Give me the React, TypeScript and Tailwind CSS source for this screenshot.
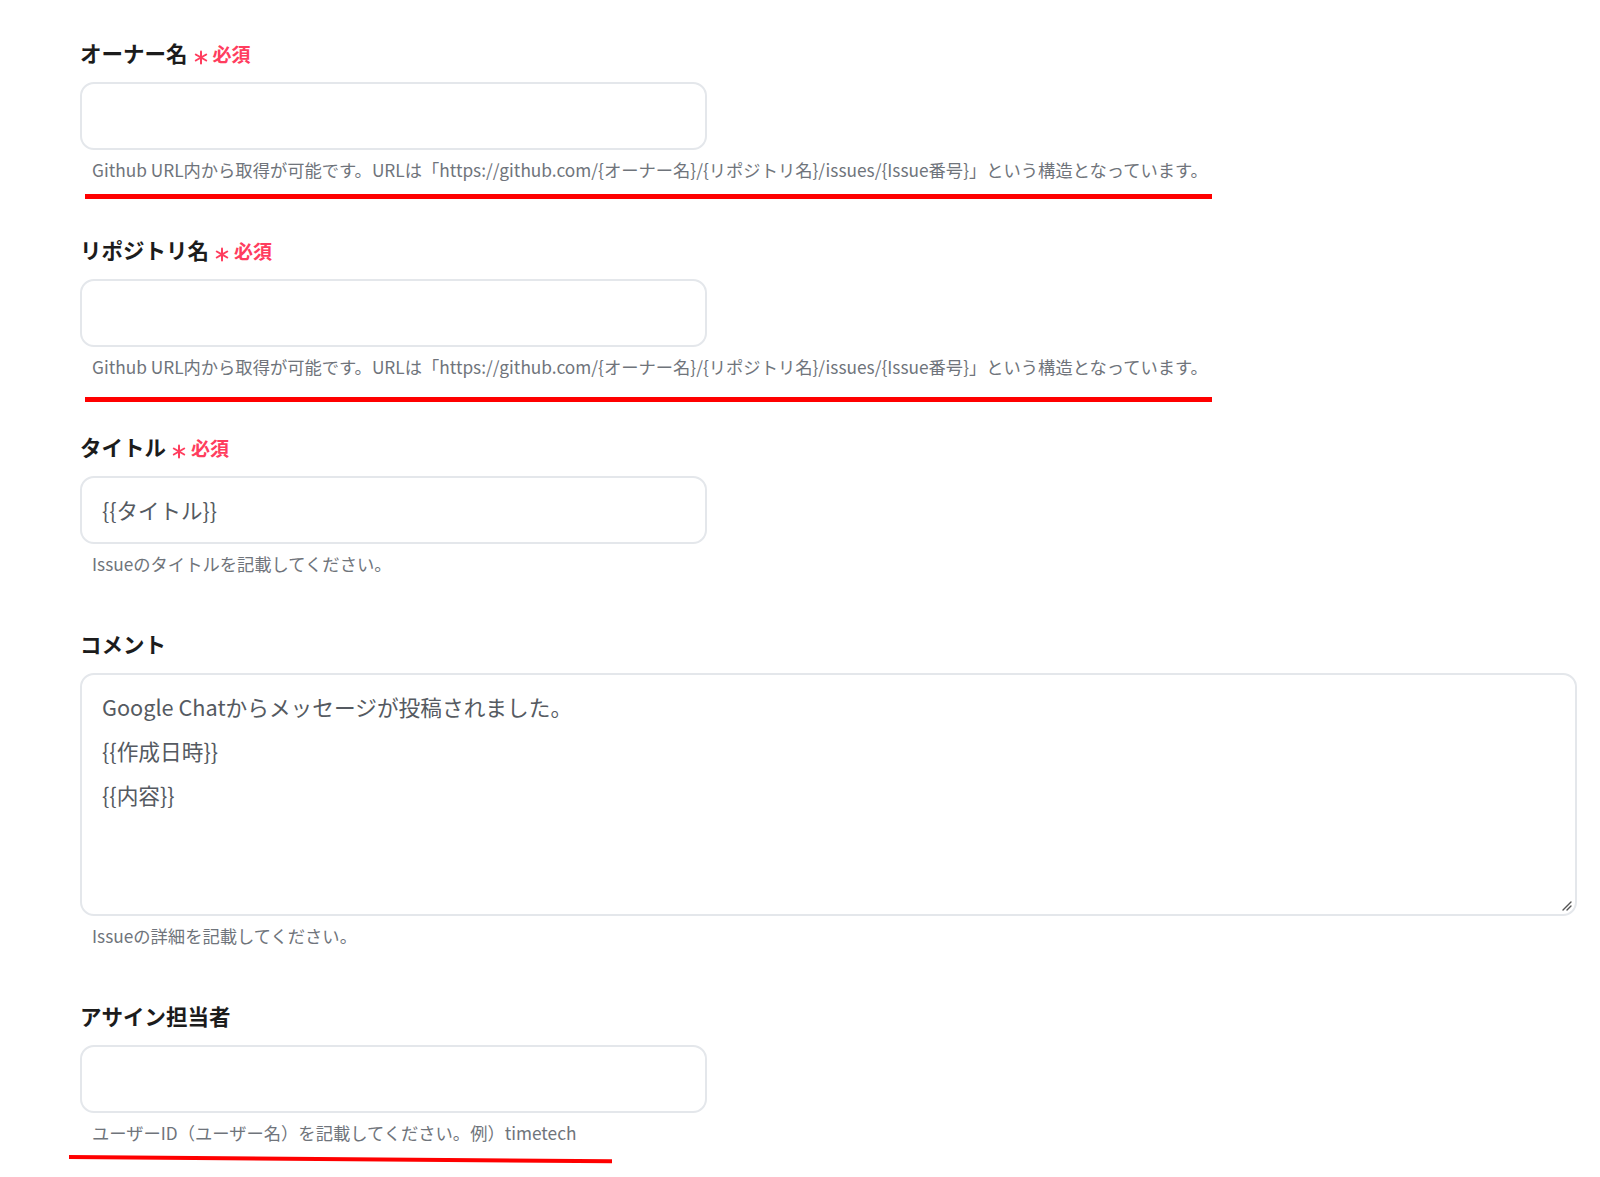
import React from 'react';

type Field = {
  label: string;
  required?: boolean;
  value?: string;
  helper: string;
  mark?: 'a' | 'b' | 'c';
};

const fields: Field[] = [
  {
    label: 'オーナー名',
    required: true,
    helper: 'Github URL内から取得が可能です。URLは「https://github.com/{オーナー名}/{リポジトリ名}/issues/{Issue番号}」という構造となっています。',
    mark: 'a',
  },
  {
    label: 'リポジトリ名',
    required: true,
    helper: 'Github URL内から取得が可能です。URLは「https://github.com/{オーナー名}/{リポジトリ名}/issues/{Issue番号}」という構造となっています。',
    mark: 'b',
  },
  {
    label: 'タイトル',
    required: true,
    value: '{{タイトル}}',
    helper: 'Issueのタイトルを記載してください。',
  },
];

// 細い6本線のアスタリスク
const Asterisk = () => (
  <svg className="ml-[6px] translate-y-[4px]" width="14" height="15" viewBox="0 0 14 15">
    <g stroke="#ff3d5e" strokeWidth="2" strokeLinecap="round">
      <path d="M7 1.5 V13.5" />
      <path d="M1.8 4.5 L12.2 10.5" />
      <path d="M12.2 4.5 L1.8 10.5" />
    </g>
  </svg>
);

const Label: React.FC<{ text: string; required?: boolean }> = ({ text, required }) => (
  <div className="flex items-center h-[28px]">
    <span className="text-[21.5px] leading-[28px] font-bold text-[#1c1c1c]">{text}</span>
    {required && (
      <>
        <Asterisk />
        <span className="ml-[5px] text-[19px] leading-[28px] font-bold text-[#ff3d5e] translate-y-[1px]">必須</span>
      </>
    )}
  </div>
);

const Helper: React.FC<{ text: string; mark?: 'a' | 'b' | 'c' }> = ({ text, mark }) => (
  <div className="relative mt-2 pl-3 text-[17.3px] leading-6 text-[#6f747b]">
    {text}
    {mark === 'a' && <div className="absolute left-[5px] top-[36px] w-[1127px] h-[5px] bg-[#ff0000]" />}
    {mark === 'b' && <div className="absolute left-[5px] top-[42px] w-[1127px] h-[5px] bg-[#ff0000]" />}
    {mark === 'c' && <div className="absolute left-[-11px] top-[34px] w-[543px] h-[4px] bg-[#ff0000] rotate-[0.45deg] origin-left" />}
  </div>
);

const InputBox: React.FC<{ value?: string }> = ({ value }) => (
  <div className="mt-[15px] w-[627px] h-[68px] rounded-[14px] border-2 border-[#e4e7eb] bg-white flex items-center pl-[20px] text-[21.5px] text-[#555a61]">
    {value}
  </div>
);

export default function App() {
  return (
    <div
      className="min-h-screen bg-white pl-[80px] pt-[39px] pb-10 flex flex-col gap-[54px]"
      style={{ fontFamily: '"Noto Sans CJK JP", "Noto Sans", sans-serif' }}
    >
      {fields.map((f) => (
        <div key={f.label} className="flex flex-col">
          <Label text={f.label} required={f.required} />
          <InputBox value={f.value} />
          <Helper text={f.helper} mark={f.mark} />
        </div>
      ))}

      {/* コメント */}
      <div className="flex flex-col">
        <Label text="コメント" />
        <div className="relative mt-[15px] w-[1497px] h-[243px] rounded-[14px] border-2 border-[#e4e7eb] bg-white pl-[20px] pt-[10px] text-[21.7px] leading-[44px] text-[#555a61]">
          <p>Google Chatからメッセージが投稿されました。</p>
          <p>{'{{作成日時}}'}</p>
          <p>{'{{内容}}'}</p>
          <svg className="absolute right-[3px] bottom-[3px]" width="11" height="11" viewBox="0 0 11 11">
            <path d="M10 2 L2 10 M10 6 L6 10" stroke="#555" strokeWidth="1.4" strokeLinecap="round" />
          </svg>
        </div>
        <Helper text="Issueの詳細を記載してください。" />
      </div>

      {/* アサイン担当者 */}
      <div className="flex flex-col">
        <Label text="アサイン担当者" />
        <InputBox />
        <Helper text="ユーザーID（ユーザー名）を記載してください。例）timetech" mark="c" />
      </div>
    </div>
  );
}
